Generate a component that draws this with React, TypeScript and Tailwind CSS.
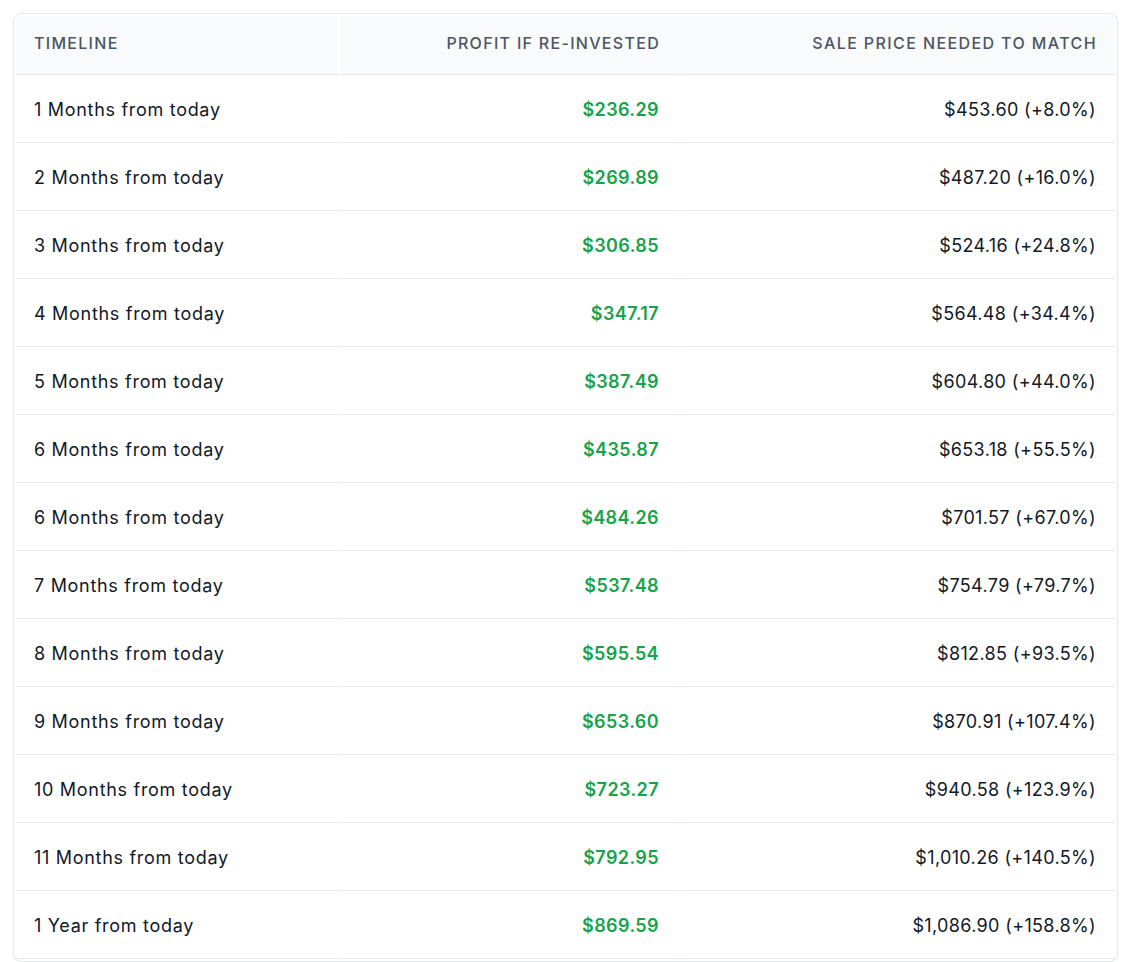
import React from "react";

const rows: [string, string, string][] = [
  ["1 Months from today", "$236.29", "$453.60 (+8.0%)"],
  ["2 Months from today", "$269.89", "$487.20 (+16.0%)"],
  ["3 Months from today", "$306.85", "$524.16 (+24.8%)"],
  ["4 Months from today", "$347.17", "$564.48 (+34.4%)"],
  ["5 Months from today", "$387.49", "$604.80 (+44.0%)"],
  ["6 Months from today", "$435.87", "$653.18 (+55.5%)"],
  ["6 Months from today", "$484.26", "$701.57 (+67.0%)"],
  ["7 Months from today", "$537.48", "$754.79 (+79.7%)"],
  ["8 Months from today", "$595.54", "$812.85 (+93.5%)"],
  ["9 Months from today", "$653.60", "$870.91 (+107.4%)"],
  ["10 Months from today", "$723.27", "$940.58 (+123.9%)"],
  ["11 Months from today", "$792.95", "$1,010.26 (+140.5%)"],
  ["1 Year from today", "$869.59", "$1,086.90 (+158.8%)"],
];

export default function App() {
  return (
    <div
      className="bg-white min-h-screen pt-[13px] pl-[13px]"
      style={{ fontFamily: "Inter, 'Noto Sans', sans-serif" }}
    >
      <div className="w-[1105px] border border-[#e5e7eb] rounded-lg overflow-hidden">
        <table className="w-full border-separate border-spacing-[2px] table-fixed">
          <colgroup>
            <col className="w-[322px]" />
            <col className="w-[339px]" />
            <col className="w-[434px]" />
          </colgroup>
          <thead>
            <tr>
              <th className="bg-[#f9fafb] border-b border-[#e5e7eb] text-left px-[18px] pt-[15px] pb-[19px] text-base leading-6 font-medium tracking-[1.3px] text-[#4b5563]">
                TIMELINE
              </th>
              <th className="bg-[#f9fafb] border-b border-[#e5e7eb] text-right px-[19px] pt-[15px] pb-[19px] text-base leading-6 font-medium tracking-[1.3px] text-[#4b5563]">
                PROFIT IF RE-INVESTED
              </th>
              <th className="bg-[#f9fafb] border-b border-[#e5e7eb] text-right px-[18px] pt-[15px] pb-[19px] text-base leading-6 font-medium tracking-[1.4px] text-[#4b5563]">
                SALE PRICE NEEDED TO MATCH
              </th>
            </tr>
          </thead>
          <tbody>
            {rows.map((r, i) => (
              <tr key={i}>
                <td className="border-b border-[#e5e7eb] text-left px-[18px] pt-[19px] pb-[18px] text-lg leading-7 tracking-[0.7px] text-[#111827]">
                  {r[0]}
                </td>
                <td className="border-b border-[#e5e7eb] text-right px-5 pt-[19px] pb-[18px] text-lg leading-7 font-semibold tracking-[0.4px] text-[#16a34a]">
                  {r[1]}
                </td>
                <td className="border-b border-[#e5e7eb] text-right px-[19px] pt-[19px] pb-[18px] text-lg leading-7 tracking-[0.35px] text-[#111827]">
                  {r[2]}
                </td>
              </tr>
            ))}
          </tbody>
        </table>
      </div>
    </div>
  );
}
